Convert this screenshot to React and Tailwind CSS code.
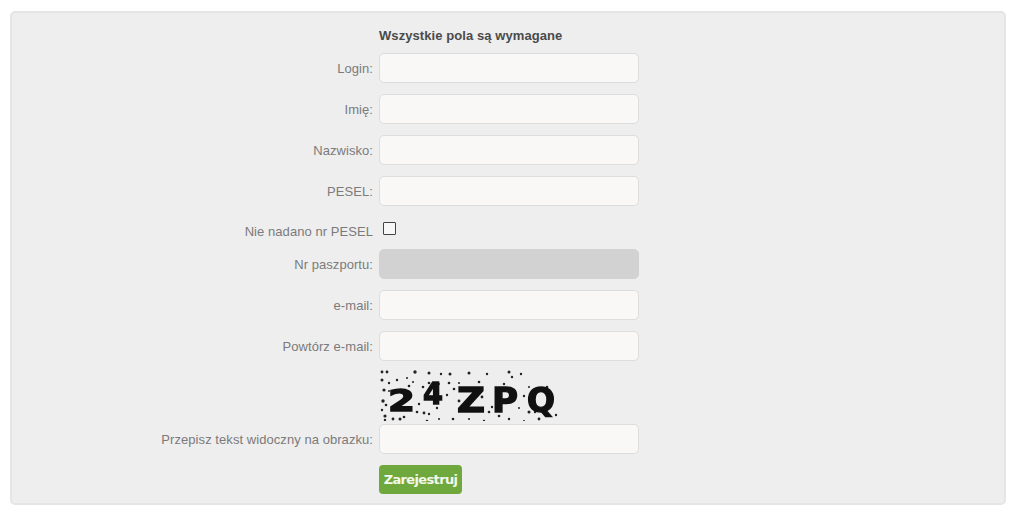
import React from 'react';

const labelClass = "w-[367px] text-right text-[13px] tracking-[0.06px] text-[#7b7b7b] pr-[6px] leading-[16px] pt-[2px]";
const inputClass = "w-[260px] h-[30px] rounded-[5px] border border-[#dddddd] bg-[#f9f8f6] outline-none block";

// noise around the captcha letters: x, y, radius
const captchaDots = [
  [3,3,1.4],[8,3,1.4],[36,3,1.7],[50,4,1.5],[62,5,1.2],[71,5,1.5],[90,4,1.5],[108,5,1.2],[130,3,1.5],[133,8,1.2],[142,5,1.2],
  [3,11,1.5],[10,14,1.2],[18,11,1.2],[28,9,1],[34,13,1],[50,14,1.3],[60,15,1],[70,14,1.3],[80,14,1],[100,13,1.3],[125,15,1.2],
  [5,21,1.6],[10,22,1],[30,17,1.3],[44,18,1.3],[58,20,1],[75,20,1.3],[100,22,1],[118,20,1.3],[150,18,1],[168,18,1.3],
  [4,32,1.7],[7,36,1.3],[40,35,1.2],[68,26,1.2],[80,32,1.4],[95,29,1],[103,28,1.4],[113,38,1.2],[118,33,1.3],[145,27,1.2],
  [3,41,1.2],[6,47,1.6],[38,43,1.3],[45,44,1.4],[50,45,1.2],[58,39,1.2],[110,43,1.3],[117,40,1],[140,39,1],[150,43,1.5],[156,43,1.2],
  [6,51,1.2],[14,50,1.4],[21,50,1.5],[25,48,1.3],[48,52,1.3],[60,50,1],[74,50,1.3],[90,50,1],[105,52,1.2],[120,47,1.3],[130,50,1.2],[145,52,1],[160,50,1.4],[177,46,1.2],
];

const captchaLetters = [
  { ch: '2', x: 9, y: 42, size: 30, w: 27 },
  { ch: '4', x: 44, y: 35, size: 31, w: 20 },
  { ch: 'Z', x: 78, y: 43, size: 34, w: 28 },
  { ch: 'P', x: 113, y: 43, size: 34, w: 26 },
  { ch: 'Q', x: 148, y: 43, size: 33, w: 28 },
];

const Field = ({ label, disabled }) => (
  <div className="flex items-center mb-[11px]">
    <label className={labelClass}>{label}</label>
    <input
      type="text"
      disabled={disabled}
      className={disabled ? "w-[260px] h-[30px] rounded-[5px] border border-[#d2d2d2] bg-[#d2d2d2] block" : inputClass}
    />
  </div>
);

const App = () => {
  return (
    <div className="w-[1024px] h-[517px] bg-white pt-[11px] pl-[10px] font-['Liberation_Sans',Arial,sans-serif] overflow-hidden">
      <div className="w-[996px] h-[494px] rounded-[5px] border-2 border-[#e5e5e5] bg-[#eeeeee]">
        <form className="pt-[13px]">
          <div className="pl-[367px] h-[27px] text-[13px] tracking-[0.08px] font-bold text-[#4a4a4a] leading-[20px]">Wszystkie pola są wymagane</div>

          <Field label="Login:" />
          <Field label="Imię:" />
          <Field label="Nazwisko:" />
          <Field label="PESEL:" />

          <div className="flex items-center h-[16px] mt-[16px] mb-[11px]">
            <label className={labelClass + " translate-y-[1px]"}>Nie nadano nr PESEL</label>
            <input type="checkbox" className="appearance-none w-[13px] h-[13px] ml-[4px] -mt-[3px] border border-[#444444] bg-[#f7f7f7] rounded-[1px] block" />
          </div>

          <Field label="Nr paszportu:" disabled />
          <Field label="e-mail:" />
          <Field label="Powtórz e-mail:" />

          <div className="pl-[367px] -mt-[3px] h-[55px]">
            <svg width="180" height="52" viewBox="0 0 180 52" className="block blur-[0.3px]">
              {captchaDots.map(([x, y, r], i) => (
                <circle key={i} cx={x} cy={y} r={r} fill="#222222" />
              ))}
              <g fontFamily="'DejaVu Sans', sans-serif" fontWeight="bold" fill="#111111" stroke="#111111" strokeWidth="1.4">
                {captchaLetters.map((l) => (
                  <text key={l.ch} x={l.x} y={l.y} fontSize={l.size} textLength={l.w} lengthAdjust="spacingAndGlyphs">{l.ch}</text>
                ))}
              </g>
            </svg>
          </div>

          <Field label="Przepisz tekst widoczny na obrazku:" />

          <div className="pl-[367px]">
            <button type="button" className="h-[29px] w-[83px] rounded-[4px] bg-[#6fa83c] text-[#f4f8ec] text-[13px] font-bold font-['DejaVu_Sans',sans-serif] tracking-[-0.65px]">
              Zarejestruj
            </button>
          </div>
        </form>
      </div>
    </div>
  );
};

export default App;
